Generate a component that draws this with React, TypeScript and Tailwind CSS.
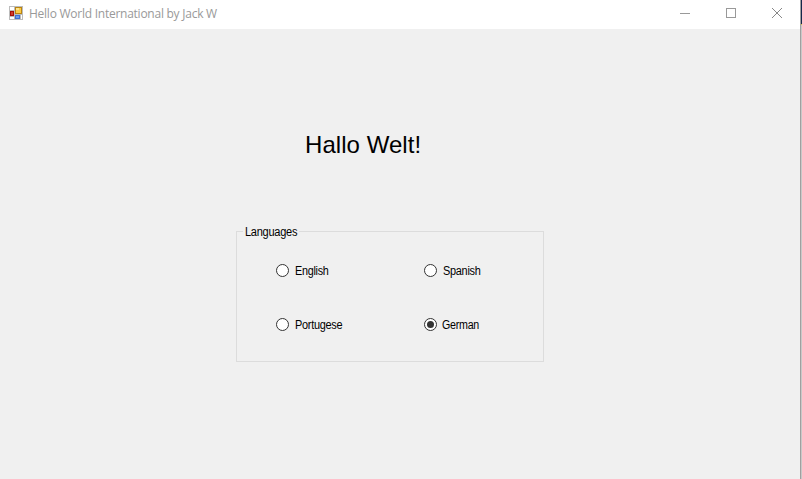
import { useState } from "react";

function AppIcon() {
  return (
    <svg width="14" height="14" viewBox="0 0 14 14" shapeRendering="crispEdges" aria-hidden="true">
      <rect width="14" height="14" fill="#bcbcbc" />
      <rect x="1" y="1" width="4" height="3" fill="#fff" />
      <rect x="1" y="11" width="4" height="2" fill="#fff" />
      <rect x="12" y="9" width="1" height="4" fill="#fff" />
      <rect x="1" y="5" width="4" height="5" fill="#a51208" />
      <rect x="2" y="6" width="2" height="3" fill="#d23a2a" />
      <rect x="6" y="1" width="7" height="7" fill="#b98412" />
      <rect x="7" y="2" width="5" height="5" fill="#fccb45" />
      <rect x="7" y="2" width="3" height="2" fill="#ffe48c" />
      <rect x="6" y="9" width="5" height="4" fill="#3f72d0" />
      <rect x="7" y="10" width="3" height="2" fill="#6d9bee" />
    </svg>
  );
}

function WindowControls() {
  return (
    <div className="flex h-full items-start gap-[34px] pt-2 pr-[17px]">
      <svg width="12" height="12" shapeRendering="crispEdges"><path d="M1 5.5h10" stroke="#999" /></svg>
      <svg width="12" height="12" shapeRendering="crispEdges"><path d="M1.5.5h9v9h-9z" fill="none" stroke="#999" /></svg>
      <svg width="12" height="12"><path d="m1 0 10 10M11 0 1 10" stroke="#888" /></svg>
    </div>
  );
}

const languages = [
  { name: "English", fit: "scale-x-[0.9]" },
  { name: "Spanish", fit: "scale-x-[0.91]" },
  { name: "Portugese", fit: "scale-x-[0.91]" },
  { name: "German", fit: "-ml-px scale-x-[0.89]" },
];

export default function App() {
  const [selected, setSelected] = useState("German");
  return (
    <div className="flex h-[479px] w-[802px] overflow-hidden bg-[#f0f0f0] font-['Liberation_Sans',Arial,sans-serif] text-black">
      <div className="flex w-[800px] flex-col">
        <header className="flex h-[29px] items-center bg-white pl-[9px]">
          <div className="mb-[3px]"><AppIcon /></div>
          <span className="mb-[2px] ml-[6px] flex-1 font-['Open_Sans','Noto_Sans',sans-serif] text-[12px] leading-4 tracking-[-0.25px] whitespace-nowrap text-[#999]">
            Hello World International by Jack W
          </span>
          <WindowControls />
        </header>
        <main className="flex flex-1 flex-col pt-[101px]">
          <h1 className="ml-[305px] h-[30px] text-[24px] leading-[30px] tracking-[0.05px] whitespace-nowrap">Hallo Welt!</h1>
          <section className="mt-[64px] ml-[236px] h-[138px] w-[308px]">
            <div className="flex h-[14px] items-start">
              <div className="mt-[7px] h-px w-[7px] bg-[#dcdcdc]" />
              <div className="mt-px w-[56px] pl-[2px] text-[12px] leading-[14px] tracking-[-0.3px]">
                <span className="inline-block origin-left scale-x-[0.92]">Languages</span>
              </div>
              <div className="mt-[7px] h-px flex-1 bg-[#dcdcdc]" />
            </div>
            <div className="-mt-[6px] grid h-[130px] grid-cols-[148px_1fr] grid-rows-[54px_54px] border border-t-0 border-[#dcdcdc] pt-[11px] pl-[39px]">
              {languages.map(({ name, fit }) => (
                <button key={name} role="radio" aria-checked={selected === name} onClick={() => setSelected(name)} className="flex items-center gap-[6px] text-[12px] leading-[14px]">
                  <svg width="13" height="13" viewBox="0 0 13 13">
                    <circle cx="6.5" cy="6.5" r="6" fill="#fff" stroke="#333" />
                    {selected === name && <circle cx="6.5" cy="6.5" r="3.5" fill="#333" />}
                  </svg>
                  <span className={`inline-block origin-left pt-[2px] tracking-[-0.3px] ${fit}`}>{name}</span>
                </button>
              ))}
            </div>
          </section>
        </main>
      </div>
      <div className="w-px bg-[#a0a0a0]" />
      <div className="flex w-px flex-col">
        <div className="h-6 bg-[#14284b]" />
        <div className="h-px bg-[#d8c44a]" />
        <div className="flex-1 bg-[#c8c8c8]" />
      </div>
    </div>
  );
}
